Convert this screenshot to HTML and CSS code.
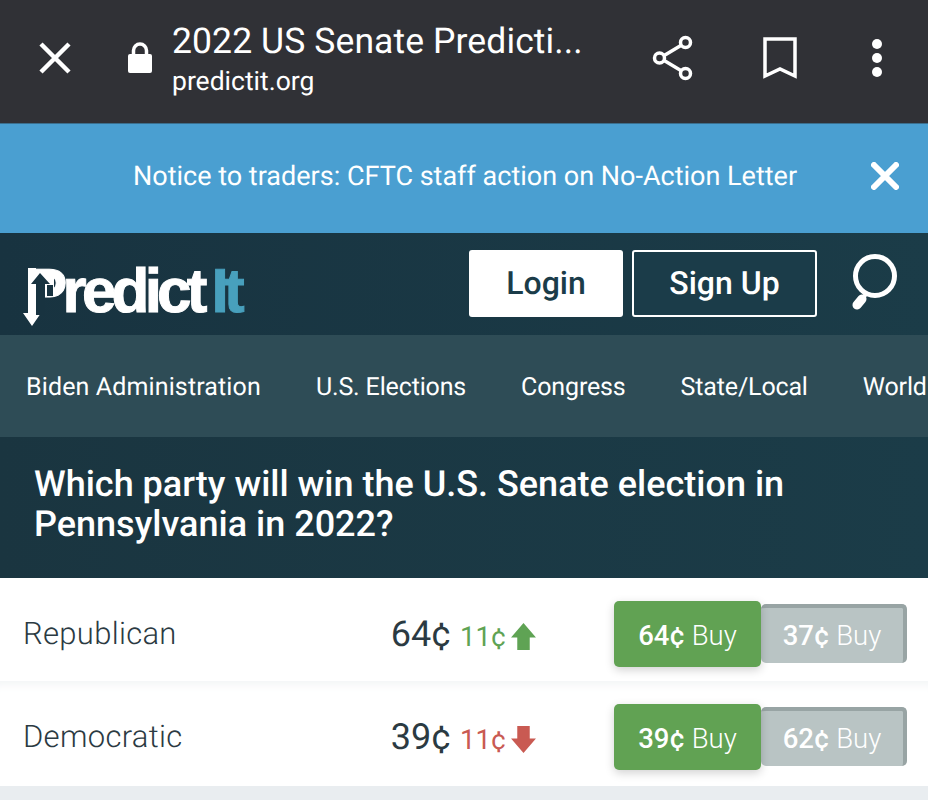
FILE: index.html
```html
<!DOCTYPE html>
<html lang="en">
<head>
    <meta charset="UTF-8">
    <meta name="viewport" content="width=device-width, initial-scale=1.0">
    <title>2022 US Senate Predictions - PredictIt</title>
    <link rel="stylesheet" href="styles.css">
</head>
<body>
    <div class="browser-bar">
        <svg class="browser-close" viewBox="0 0 32 32"><path d="M2 2 L30 30 M30 2 L2 30"/></svg>
        <svg class="browser-lock" viewBox="0 0 26 32"><path class="lock-body" d="M3 12 H23 Q25 12 25 14 V29 Q25 31 23 31 H3 Q1 31 1 29 V14 Q1 12 3 12 Z"/><path class="lock-loop" d="M6.500 13 V8.500 A6.500 6.500 0 0 1 19.500 8.500 V13"/></svg>
        <div class="browser-title">
            <div class="page-title">2022 US Senate Predicti...</div>
            <div class="page-url">predictit.org</div>
        </div>
        <svg class="browser-share" viewBox="0 0 42 46"><path d="M8 23 L33 8 M8 23 L33 38"/><circle cx="33.500" cy="7.500" r="5"/><circle cx="7.500" cy="23" r="5"/><circle cx="33.500" cy="38.500" r="5"/></svg>
        <svg class="browser-bookmark" viewBox="0 0 34 42"><path d="M2 2 H32 V39 L17 32 L2 39 Z"/></svg>
        <div class="browser-menu"><span></span><span></span><span></span></div>
    </div>

    <div class="notice">
        <span class="notice-text">Notice to traders: CFTC staff action on No-Action Letter</span>
        <svg class="notice-close" viewBox="0 0 28 28"><path d="M3 3 L25 25 M25 3 L3 25"/></svg>
    </div>

    <div class="site-header">
        <div class="logo">
            <span class="logo-white">Predict</span><span class="logo-blue">It</span>
            <!-- arrows cut into the stem of the P -->
            <svg class="logo-arrows" viewBox="0 0 34 62">
                <path class="arrow-patch" d="M14 5 H32 V30 H14 Z"/>
                <path class="arrow-down" d="M6 3 H14 V48 H19 L10 61 L1 48 H6 Z"/>
                <path class="arrow-up" d="M18 8 L28 19 H23 V50 H14 V19 H9 Z"/>
                <path class="arrow-notch" d="M25 20 H31 V31 H25 Z"/>
            </svg>
        </div>
        <a class="login-btn" href="#">Login</a>
        <a class="signup-btn" href="#">Sign Up</a>
        <svg class="search-icon" viewBox="0 0 48 56"><circle cx="25" cy="22" r="19.500"/><path class="search-neck" d="M16 40 L12 45"/><path class="search-handle" d="M12 45 L7 51"/></svg>
    </div>

    <div class="site-nav">
        <a class="nav-wide" href="#">Biden Administration</a>
        <a href="#">U.S. Elections</a>
        <a href="#">Congress</a>
        <a href="#">State/Local</a>
        <a href="#">World</a>
    </div>

    <div class="question">
        <h1>Which party will win the U.S. Senate election in Pennsylvania in 2022?</h1>
    </div>

    <div class="contracts">
        <div class="contract">
            <div class="contract-name">Republican</div>
            <div class="contract-price">64¢</div>
            <div class="contract-change up">11¢<svg viewBox="0 0 24 26"><path d="M12 0 L24 14 H18 V26 H6 V14 H0 Z"/></svg></div>
            <div class="contract-buttons">
                <button class="buy-yes"><b>64¢</b> Buy</button>
                <button class="buy-no"><b>37¢</b> Buy</button>
            </div>
        </div>
        <div class="contract">
            <div class="contract-name">Democratic</div>
            <div class="contract-price">39¢</div>
            <div class="contract-change down">11¢<svg viewBox="0 0 24 26"><path d="M6 0 H18 V12 H24 L12 26 L0 12 H6 Z"/></svg></div>
            <div class="contract-buttons">
                <button class="buy-yes"><b>39¢</b> Buy</button>
                <button class="buy-no"><b>62¢</b> Buy</button>
            </div>
        </div>
    </div>
</body>
</html>
```

FILE: styles.css
```css
* {
    margin: 0;
    padding: 0;
    box-sizing: border-box;
}

body {
    font-family: Roboto, "Liberation Sans", sans-serif;
    text-rendering: geometricPrecision;
    background: #e9edf0;
    width: 928px;
    height: 800px;
    overflow: hidden;
    color: white;
}

a {
    text-decoration: none;
    color: inherit;
}

svg {
    display: block;
    flex-shrink: 0;
}

.browser-bar {
    height: 124px;
    background: #303136;
    display: flex;
    align-items: center;
    padding-bottom: 8px;
    border-bottom: 1px solid #3b6f8e;
}

.browser-close {
    width: 32px;
    height: 32px;
    margin-left: 39px;
    fill: none;
    stroke: white;
    stroke-width: 4.500;
}

.browser-lock {
    width: 26px;
    height: 32px;
    margin-left: 56px;
}

.lock-body {
    fill: white;
}

.lock-loop {
    fill: none;
    stroke: white;
    stroke-width: 3.500;
}

.browser-title {
    margin-left: 19px;
    width: 480px;
    margin-top: 6px;
}

.page-title {
    font-size: 35.500px;
    letter-spacing: 0.1px;
    line-height: 42px;
}

.page-url {
    font-size: 26.500px;
    line-height: 39px;
}

.browser-share {
    width: 42px;
    height: 46px;
    fill: #303136;
    stroke: white;
    stroke-width: 3.500;
}

.browser-bookmark {
    width: 34px;
    height: 42px;
    margin-left: 69px;
    fill: none;
    stroke: white;
    stroke-width: 3.500;
}

.browser-menu {
    margin-left: 75px;
    display: flex;
    flex-direction: column;
    gap: 4px;
}

.browser-menu span {
    width: 10px;
    height: 10px;
    border-radius: 50%;
    background: white;
}

.notice {
    height: 109px;
    background: #4a9fd1;
    display: flex;
    align-items: center;
    padding-left: 133px;
    padding-bottom: 6px;
}

.notice-text {
    font-size: 27px;
    width: 738px;
}

.notice-close {
    width: 28px;
    height: 28px;
    fill: none;
    stroke: white;
    stroke-width: 6;
    stroke-linecap: round;
}

.site-header {
    height: 102px;
    background: linear-gradient(90deg, #183340, #1b3c48);
    display: flex;
    align-items: flex-start;
    padding-top: 17px;
}

.logo {
    width: 446px;
    padding-left: 26px;
    padding-top: 11px;
    font-family: "Liberation Sans", Arial, sans-serif;
    font-weight: 700;
    font-size: 62px;
    line-height: 62px;
    letter-spacing: -4.800px;
    position: relative;
    -webkit-text-stroke: 1px currentColor;
}

.logo-arrows {
    position: absolute;
    left: 22px;
    top: 15px;
    width: 34px;
    height: 62px;
}

.arrow-patch,
.arrow-down {
    fill: white;
}

.arrow-up,
.arrow-notch {
    fill: #183340;
}

.logo-white {
    color: white;
}

.logo-blue {
    color: #48a0bd;
    margin-left: 9px;
}

.login-btn,
.signup-btn {
    height: 67px;
    display: flex;
    align-items: center;
    justify-content: center;
    padding-bottom: 2px;
    font-size: 32px;
    font-weight: 500;
    border-radius: 3px;
}

.login-btn {
    width: 154px;
    margin-left: 23px;
    background: white;
    color: #1b3c49;
}

.signup-btn {
    width: 185px;
    margin-left: 9px;
    border: 2px solid white;
    background: #1b3c49;
}

.search-icon {
    width: 48px;
    height: 56px;
    margin-left: 33px;
    margin-top: 4px;
    fill: none;
    stroke: white;
    stroke-width: 5;
}

.search-neck {
    stroke-width: 4;
}

.search-handle {
    stroke-width: 9;
    stroke-linecap: round;
}

.site-nav {
    height: 102px;
    background: #2e4c56;
    display: flex;
    align-items: center;
    gap: 55px;
    padding-left: 26px;
    padding-top: 3px;
    font-size: 25px;
    letter-spacing: -0.15px;
    white-space: nowrap;
    overflow: hidden;
}

.site-nav .nav-wide {
    letter-spacing: 0.13px;
}

.question {
    height: 141px;
    background: linear-gradient(90deg, #1a3540, #1b3c48);
    padding: 27px 34px 0 34px;
}

.question h1 {
    font-size: 36px;
    font-weight: 500;
    line-height: 40px;
}

.contracts {
    background: white;
    padding-bottom: 2px;
}

.contract {
    height: 103px;
    display: flex;
    align-items: center;
    color: #2b3a42;
    padding-top: 8px;
}

.contract + .contract {
    box-shadow: inset 0 12px 10px -8px #f3f5f6;
}

.contract-name {
    width: 382px;
    padding-left: 23px;
    font-size: 31px;
    font-weight: 300;
    letter-spacing: 0.3px;
}

.contract-price {
    width: 69px;
    font-size: 36px;
    text-align: right;
    margin-right: 9px;
    white-space: nowrap;
}

.contract-change {
    width: 154px;
    display: flex;
    align-items: center;
    gap: 5px;
    font-size: 27.500px;
    margin-top: 6px;
}

.contract-change svg {
    width: 25px;
    height: 27px;
}

.contract-change.up {
    color: #5fa354;
    fill: #5fa354;
}

.contract-change.down {
    color: #c95a52;
    fill: #c95a52;
}

.contract-buttons {
    display: flex;
    align-items: center;
}

.contract-buttons button {
    font-family: inherit;
    font-size: 27.500px;
    font-weight: 300;
    color: white;
    border: none;
    border-radius: 5px;
}

.contract-buttons b {
    font-weight: 500;
}

.buy-yes {
    width: 147px;
    height: 66px;
    padding-top: 4px;
    background: #61a253;
    box-shadow: 0 3px 10px rgba(0, 0, 0, 0.18);
    position: relative;
}

.buy-no {
    width: 146px;
    height: 59px;
    background: #b9c4c4;
    border-top: 4px solid #98a4a4 !important;
    border-right: 4px solid #98a4a4 !important;
}
```
